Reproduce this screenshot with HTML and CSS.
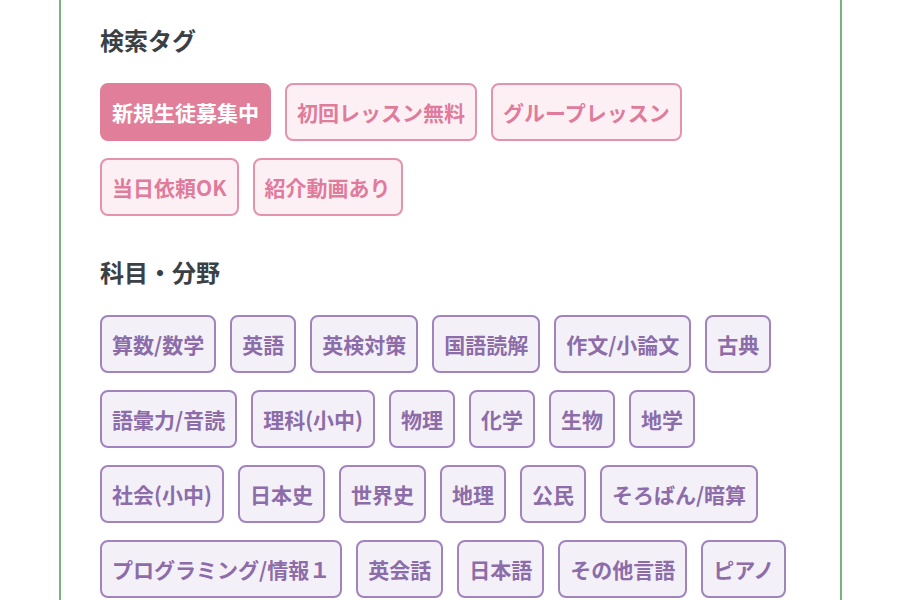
FILE: index.html
```html
<!DOCTYPE html>
<html lang="ja">
<head>
<meta charset="utf-8">
<link rel="stylesheet" href="styles.css">
</head>
<body>
<div class="panel">
  <section class="section">
    <h2 class="heading">検索タグ</h2>
    <div class="tags">
      <span class="tag tag-pink is-active">新規生徒募集中</span>
      <span class="tag tag-pink">初回レッスン無料</span>
      <span class="tag tag-pink">グループレッスン</span>
      <span class="tag tag-pink">当日依頼OK</span>
      <span class="tag tag-pink">紹介動画あり</span>
    </div>
  </section>
  <section class="section">
    <h2 class="heading">科目・分野</h2>
    <div class="tags">
      <span class="tag tag-purple">算数/数学</span>
      <span class="tag tag-purple">英語</span>
      <span class="tag tag-purple">英検対策</span>
      <span class="tag tag-purple">国語読解</span>
      <span class="tag tag-purple">作文/小論文</span>
      <span class="tag tag-purple">古典</span>
      <span class="tag tag-purple">語彙力/音読</span>
      <span class="tag tag-purple">理科(小中)</span>
      <span class="tag tag-purple">物理</span>
      <span class="tag tag-purple">化学</span>
      <span class="tag tag-purple">生物</span>
      <span class="tag tag-purple">地学</span>
      <span class="tag tag-purple">社会(小中)</span>
      <span class="tag tag-purple">日本史</span>
      <span class="tag tag-purple">世界史</span>
      <span class="tag tag-purple">地理</span>
      <span class="tag tag-purple">公民</span>
      <span class="tag tag-purple">そろばん/暗算</span>
      <span class="tag tag-purple">プログラミング/情報１</span>
      <span class="tag tag-purple">英会話</span>
      <span class="tag tag-purple">日本語</span>
      <span class="tag tag-purple">その他言語</span>
      <span class="tag tag-purple">ピアノ</span>
    </div>
  </section>
</div>
</body>
</html>
```

FILE: styles.css
```css
html, body {
  margin: 0;
  padding: 0;
  background: #ffffff;
}

body {
  font-family: "Noto Sans CJK JP", "Noto Sans", sans-serif;
  color: #3b4045;
}

.panel {
  box-sizing: border-box;
  margin-left: 59px;
  width: 783px;
  min-height: 600px;
  border-left: 2px solid #78b27c;
  border-right: 2px solid #78b27c;
  padding: 22px 39px 0;
  background: #ffffff;
}

.section + .section {
  margin-top: 38px;
}

.heading {
  margin: 0 0 25px;
  font-size: 24px;
  line-height: 36px;
  font-weight: 700;
  color: #3b4045;
}

.tags {
  display: flex;
  flex-wrap: wrap;
  gap: 17px 14px;
}

.tag {
  box-sizing: border-box;
  display: inline-flex;
  align-items: center;
  height: 58px;
  padding: 0 10px;
  border: 2px solid;
  border-radius: 8px;
  font-size: 21px;
  font-weight: 700;
  white-space: nowrap;
}

.tag-pink {
  background: #fdf0f4;
  border-color: #e592ad;
  color: #e07b9b;
}

.tag-pink.is-active {
  background: #e17f9b;
  border-color: #e17f9b;
  color: #ffffff;
}

.tag-purple {
  background: #f4f0f8;
  border-color: #a183bd;
  color: #8c6ca9;
}
```
